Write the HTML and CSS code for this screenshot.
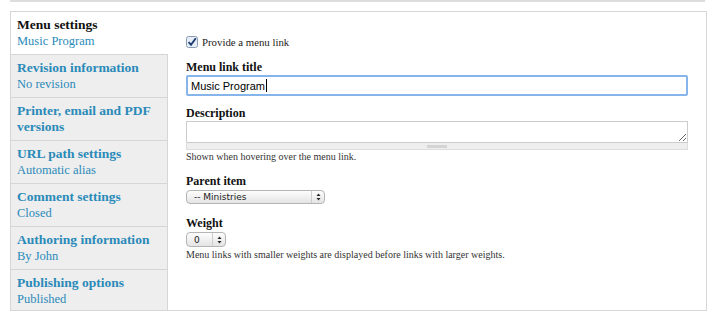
FILE: index.html
```html
<!DOCTYPE html>
<html lang="en">
<head>
    <meta charset="UTF-8">
    <title>Menu settings</title>
    <link rel="stylesheet" href="styles.css">
</head>
<body>
    <div class="top-rule"></div>
    <div class="vertical-tabs">
        <ul class="tab-list">
            <li class="tab active">
                <strong>Menu settings</strong>
                <span class="summary">Music Program</span>
            </li>
            <li class="tab">
                <strong>Revision information</strong>
                <span class="summary">No revision</span>
            </li>
            <li class="tab">
                <strong>Printer, email and PDF versions</strong>
            </li>
            <li class="tab">
                <strong>URL path settings</strong>
                <span class="summary">Automatic alias</span>
            </li>
            <li class="tab">
                <strong>Comment settings</strong>
                <span class="summary">Closed</span>
            </li>
            <li class="tab">
                <strong>Authoring information</strong>
                <span class="summary">By John</span>
            </li>
            <li class="tab">
                <strong>Publishing options</strong>
                <span class="summary">Published</span>
            </li>
        </ul>

        <div class="tab-pane">
            <div class="form-item checkbox-item">
                <span class="checkbox">
                    <svg width="12" height="12" viewBox="0 0 12 12">
                        <rect x="0.5" y="0.5" width="11" height="11" rx="2" fill="#e8eef7" stroke="#8a9bb3"/>
                        <path d="M2.6 6.2 L5 8.8 L9.8 2.2" fill="none" stroke="#1b3c72" stroke-width="1.9"/>
                    </svg>
                </span>
                <label>Provide a menu link</label>
            </div>

            <div class="form-item">
                <label class="field-label">Menu link title</label>
                <div class="text-input">Music Program<span class="caret"></span></div>
            </div>

            <div class="form-item">
                <label class="field-label">Description</label>
                <div class="textarea-wrap">
                    <textarea class="textarea"></textarea>
                    <div class="grippie"><span></span></div>
                </div>
                <div class="description">Shown when hovering over the menu link.</div>
            </div>

            <div class="form-item parent-item">
                <label class="field-label">Parent item</label>
                <div class="select wide">
                    <span class="select-text">-- Ministries</span>
                    <span class="select-arrows">
                        <svg width="5" height="8" viewBox="0 0 5 8">
                            <path d="M0.5 3 L2.5 0.5 L4.5 3 Z M0.5 5 L2.5 7.5 L4.5 5 Z" fill="#222"/>
                        </svg>
                    </span>
                </div>
            </div>

            <div class="form-item">
                <label class="field-label">Weight</label>
                <div class="select narrow">
                    <span class="select-text">0</span>
                    <span class="select-arrows">
                        <svg width="5" height="8" viewBox="0 0 5 8">
                            <path d="M0.5 3 L2.5 0.5 L4.5 3 Z M0.5 5 L2.5 7.5 L4.5 5 Z" fill="#222"/>
                        </svg>
                    </span>
                </div>
                <div class="description">Menu links with smaller weights are displayed before links with larger weights.</div>
            </div>
        </div>
    </div>
</body>
</html>
```

FILE: styles.css
```css
body {
    margin: 0;
    padding: 0;
    background-color: #fff;
    font-family: 'Liberation Serif', Georgia, serif;
    color: #222;
}

.top-rule {
    margin: 0 3px 0 10px;
    height: 2px;
    background-color: #ddd;
}

.vertical-tabs {
    display: flex;
    margin: 9px 1px 0 10px;
    height: 298px;
    border: 1px solid #d6d6d6;
}

.tab-list {
    list-style: none;
    margin: 0;
    padding: 0;
    width: 156px;
    background-color: #eee;
    border-right: 1px solid #d6d6d6;
}

.tab {
    padding: 5px 6px 5px 6px;
    line-height: 16px;
    border-bottom: 1px solid #d6d6d6;
}

.tab strong {
    display: block;
    font-size: 13.5px;
    color: #2a8ab9;
}

.tab .summary {
    display: block;
    font-size: 12.5px;
    color: #2a8ab9;
}

.tab.active {
    background-color: #fff;
    margin-right: -1px;
}

.tab.active strong {
    color: #111;
}

.tab-pane {
    flex: 1;
    padding: 23px 18px 0 18px;
    font-size: 12px;
}

.form-item {
    margin-bottom: 9px;
}

.parent-item {
    margin-bottom: 11px;
}

.checkbox-item {
    display: flex;
    align-items: center;
    gap: 3px;
    height: 14px;
    margin-bottom: 10px;
}

.checkbox {
    display: flex;
    width: 13px;
}

.checkbox-item label {
    font-size: 10.8px;
}

.field-label {
    display: block;
    font-weight: bold;
    font-size: 12px;
    line-height: 16px;
    color: #111;
}

.text-input {
    display: flex;
    align-items: center;
    box-sizing: border-box;
    width: 502px;
    height: 21px;
    padding: 0 3px;
    border: 2px solid #85b5ea;
    border-radius: 2px;
    font-family: 'Liberation Sans', 'Lucida Grande', sans-serif;
    font-size: 11px;
    color: #000;
}

.caret {
    display: inline-block;
    width: 1px;
    height: 13px;
    margin-left: 1px;
    background-color: #000;
}

.textarea-wrap {
    width: 502px;
}

.textarea {
    display: block;
    box-sizing: border-box;
    width: 502px;
    height: 21px;
    margin: 0;
    border: 1px solid #ccc;
    border-bottom: none;
    resize: vertical;
    outline: none;
}

.grippie {
    height: 6px;
    background-color: #eee;
    border: 1px solid #ddd;
    border-top-color: #ccc;
    display: flex;
    justify-content: center;
    align-items: center;
}

.grippie span {
    display: block;
    width: 20px;
    height: 3px;
    background-color: #d4d4d4;
}

.description {
    font-size: 10px;
    line-height: 14px;
    color: #333;
}

.select {
    display: flex;
    align-items: center;
    box-sizing: border-box;
    height: 14px;
    margin-top: 1px;
    border: 1px solid #b4b4b4;
    border-radius: 4px;
    background: linear-gradient(#fdfdfd, #e4e4e4);
    font-family: 'DejaVu Sans', 'Lucida Grande', sans-serif;
    font-size: 9px;
    color: #222;
}

.select.wide {
    width: 139px;
}

.select.narrow {
    width: 40px;
    height: 15px;
    margin-bottom: 1px;
}

.select-text {
    flex: 1;
    padding-left: 7px;
}

.select-arrows {
    display: flex;
    align-items: center;
    justify-content: center;
    width: 12px;
    height: 100%;
    border-left: 1px solid #ccc;
}
```
